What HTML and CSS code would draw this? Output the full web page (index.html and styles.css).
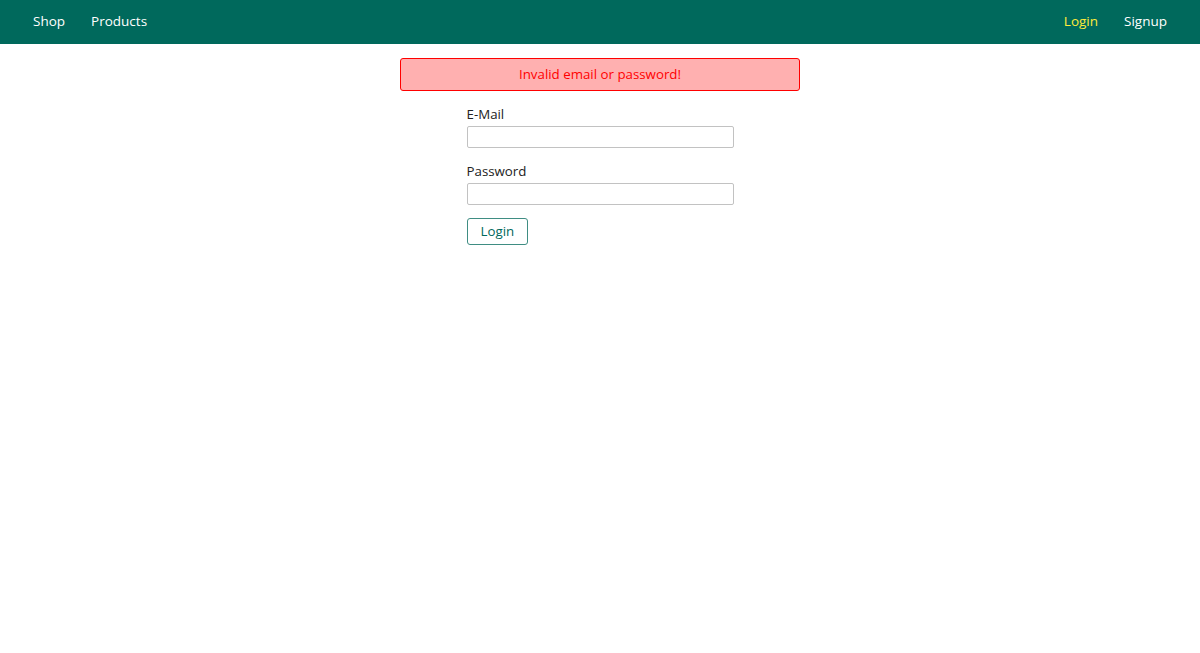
FILE: index.html
```html
<!DOCTYPE html>
<html lang="en">

<head>
    <meta charset="UTF-8">
    <title>Login</title>
    <link rel="stylesheet" href="styles.css">
</head>

<body>
    <header class="main-header">
        <nav class="main-header__nav">
            <ul class="main-header__item-list">
                <li class="main-header__item"><a href="#">Shop</a></li>
                <li class="main-header__item"><a href="#">Products</a></li>
            </ul>
            <ul class="main-header__item-list">
                <li class="main-header__item"><a class="active" href="#">Login</a></li>
                <li class="main-header__item"><a href="#">Signup</a></li>
            </ul>
        </nav>
    </header>
    <main>
        <div class="user-message user-message--error">Invalid email or password!</div>
        <form class="login-form" action="#" method="POST">
            <div class="form-control">
                <label for="email">E-Mail</label>
                <input type="email" name="email" id="email">
            </div>
            <div class="form-control">
                <label for="password">Password</label>
                <input type="password" name="password" id="password">
            </div>
            <button class="btn" type="submit">Login</button>
        </form>
    </main>
</body>

</html>
```
FILE: styles.css
```css
* {
    box-sizing: border-box;
}

body {
    margin: 0;
    padding: 0;
    font-family: "Open Sans", sans-serif;
    font-size: 13.3px;
}

main {
    padding: 14px 12.8px;
}

.main-header {
    width: 100%;
    height: 44px;
    background-color: #00695c;
    padding: 0 20px 3px;
    display: flex;
    align-items: center;
}

.main-header__nav {
    width: 100%;
    display: flex;
    align-items: center;
    justify-content: space-between;
}

.main-header__item-list {
    list-style: none;
    margin: 0;
    padding: 0;
    display: flex;
}

.main-header__item {
    margin: 0 13px;
}

.main-header__item a {
    text-decoration: none;
    color: white;
    font-size: 13.5px;
}

.main-header__item a.active {
    color: #ffeb3b;
}

.user-message {
    margin: 0 auto;
    width: 400px;
    border: 1px solid #4771fa;
    padding: 6.4px;
    border-radius: 3px;
    background: #b9c9ff;
    text-align: center;
    line-height: 18px;
}

.user-message--error {
    border-color: red;
    background: #ffb0b0;
    color: red;
}

.login-form {
    width: 267px;
    margin: 14px auto 0;
}

.form-control {
    margin: 0 0 14px;
}

.form-control label {
    display: block;
    width: 100%;
    margin-bottom: 3px;
    line-height: 18px;
    color: #222;
}

.form-control input {
    display: block;
    width: 100%;
    height: 22px;
    border: 1px solid #c2c2c2;
    border-radius: 2px;
    font: inherit;
    padding: 2px 4px;
}

.btn {
    font: inherit;
    height: 27px;
    margin-top: -1px;
    border: 1px solid #3f8d83;
    color: #00695c;
    background: white;
    border-radius: 3px;
    padding: 0 13px;
    cursor: pointer;
}
```
